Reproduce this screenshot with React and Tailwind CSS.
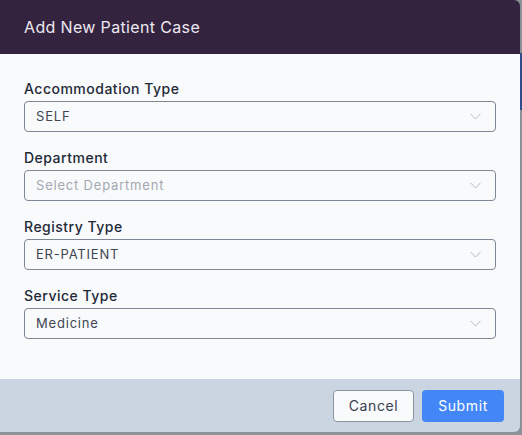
const FIELDS = [
  { label: "Accommodation Type", value: "SELF" },
  { label: "Department", value: "", placeholder: "Select Department" },
  { label: "Registry Type", value: "ER-PATIENT" },
  { label: "Service Type", value: "Medicine" },
]

function Chevron() {
  return (
    <svg width="11" height="7" viewBox="0 0 11 7" fill="none" className="shrink-0">
      <path d="M0.5 0.8L5.5 6L10.5 0.8" stroke="#b4bac2" strokeWidth="1" />
    </svg>
  )
}

function SelectField({ field }) {
  return (
    <div className="flex flex-col">
      <label className="text-[14px] font-medium text-[#1f2937] leading-[20px] mb-[2px] tracking-[0.5px]">
        {field.label}
      </label>
      <div className="h-[31px] flex items-center justify-between pl-[11px] pr-[14px] border border-[#7d8794] rounded-[4px] bg-[#f8fafc]">
        {field.value ? (
          <span className="text-[13px] text-[#3f4652] tracking-[0.8px]">{field.value}</span>
        ) : (
          <span className="text-[13px] text-[#a3a9b1] tracking-[0.8px]">{field.placeholder}</span>
        )}
        <Chevron />
      </div>
    </div>
  )
}

export default function App() {
  return (
    <div
      className="w-[522px] h-[435px] bg-[#8c9197] flex flex-col overflow-hidden"
      style={{ fontFamily: "Inter, 'Open Sans', sans-serif" }}
    >
      <div className="flex h-[432px]">
        <div className="w-[520px] h-[432px] flex flex-col rounded-r-[6px] overflow-hidden">
          <div className="h-[54px] bg-[#33233f] flex items-center px-6 shrink-0">
            <h2 className="text-[16px] text-[#ece8f0] tracking-[0.35px]">Add New Patient Case</h2>
          </div>
          <div className="flex-1 bg-[#f8fafc] px-6 pt-[25px] flex flex-col gap-[16px]">
            {FIELDS.map(f => (
              <SelectField key={f.label} field={f} />
            ))}
          </div>
          <div className="h-[53px] bg-[#cbd5e1] flex items-center justify-end gap-2 pr-4 shrink-0">
            <button className="h-[32px] w-[81px] rounded-[4px] border border-[#8c96a3] bg-[#f8fafc] text-[14px] text-[#3a414b] tracking-[0.6px]">
              Cancel
            </button>
            <button className="h-[32px] w-[82px] rounded-[4px] bg-[#4287f5] text-[14px] text-white tracking-[0.6px]">
              Submit
            </button>
          </div>
        </div>
        <div className="w-[2px] flex flex-col">
          <div className="h-[53px] bg-[#8c9197]" />
          <div className="h-[57px] bg-[#2d4f8e]" />
          <div className="flex-1 bg-[#8c9197]" />
        </div>
      </div>
    </div>
  )
}
